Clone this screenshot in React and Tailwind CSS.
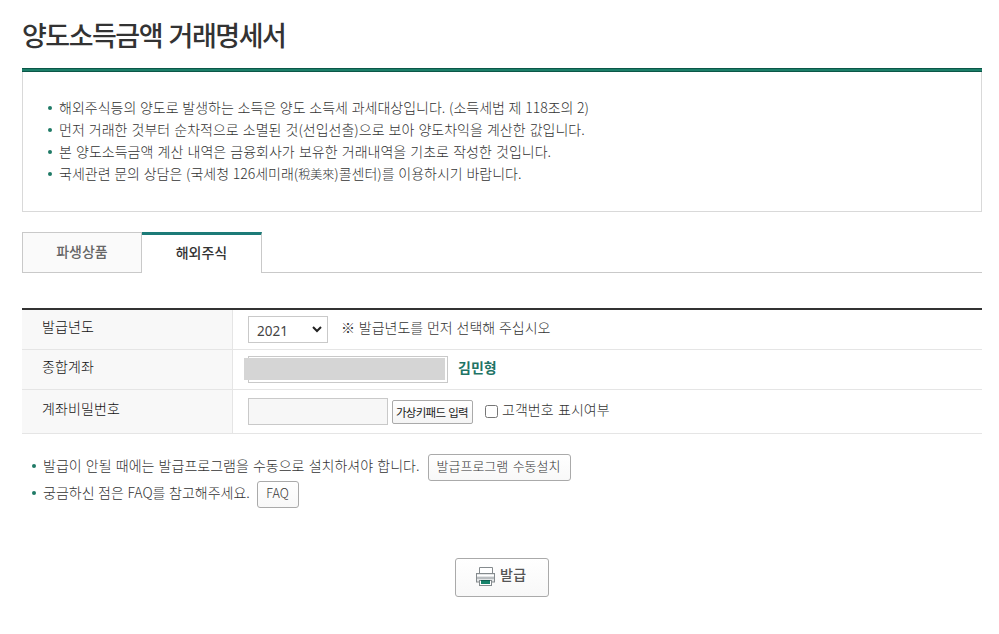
const notices = [
  { text: '해외주식등의 양도로 발생하는 소득은 양도 소득세 과세대상입니다. (소득세법 제 118조의 2)', spacing: '[word-spacing:0.6px]' },
  { text: '먼저 거래한 것부터 순차적으로 소멸된 것(선입선출)으로 보아 양도차익을 계산한 값입니다.', spacing: '[word-spacing:1px]' },
  { text: '본 양도소득금액 계산 내역은 금융회사가 보유한 거래내역을 기초로 작성한 것입니다.', spacing: '[word-spacing:1.1px]' },
  {
    text: '국세관련 문의 상담은 (국세청 126세미래(',
    hanja: '稅美來',
    rest: ')콜센터)를 이용하시기 바랍니다.',
    spacing: '[word-spacing:0.6px]',
  },
];

function Bullet({ className = '' }) {
  return <span className={`size-1 shrink-0 rounded-full bg-[#1f7a66] ${className}`} />;
}

function Row({ label, height, labelPad = 'pb-[7px]', children }) {
  return (
    <div className={`flex border-b border-[#e5e5e5] ${height}`}>
      <div className={`flex w-[211px] items-center border-r border-[#e5e5e5] bg-[#f8f8f8] pl-5 text-[#111] ${labelPad}`}>
        <span className="tracking-[0.1px]">{label}</span>
      </div>
      <div className="flex flex-1 items-start pl-[15px]">{children}</div>
    </div>
  );
}

function Printer() {
  return (
    <svg width="20" height="20" viewBox="0 0 20 20" fill="none">
      <path d="M3.500 7V.5h13V7" fill="#fff" stroke="#858b8e" />
      <rect x=".5" y="6.5" width="18" height="8.500" fill="#e4e6e7" stroke="#858b8e" />
      <path d="M1 8.500h17" stroke="#fff" />
      <path d="M1 11h17" stroke="#b9bdc0" strokeWidth="2" />
      <rect x="3.500" y="13.500" width="12" height="5" fill="#fff" stroke="#858b8e" />
      <rect x="5" y="13" width="9" height="4" fill="#16836a" />
      <path d="M5 13.500h9" stroke="#0d5f50" />
    </svg>
  );
}

export default function App() {
  return (
    <main className="h-[634px] w-[999px] overflow-hidden bg-white pr-[17px] pl-[22px] font-['Noto_Sans_CJK_KR',sans-serif] text-sm leading-[22px] font-light text-[#333]">
      <h1 className="h-[68px] pt-[14px] text-[27px] leading-[42px] font-medium tracking-[-1.500px] [word-spacing:2px] whitespace-nowrap text-[#333]">
        양도소득금액 거래명세서
      </h1>
      <div className="h-1 border-y border-[#0b5748] bg-[#1c7f69]" />
      <ul className="h-[140px] border-x border-b border-[#d9d9d9] pt-[24px] pl-[25px]">
        {notices.map((n) => (
          <li key={n.text} className="flex h-[22px] items-center whitespace-nowrap">
            <Bullet className="mt-0.5 mr-[7px]" />
            <span className={n.spacing}>
              {n.text}
              {n.hanja && <span className="text-xs leading-none">{n.hanja}</span>}
              {n.rest}
            </span>
          </li>
        ))}
      </ul>

      <nav className="mt-5 flex h-[41px]">
        <button className="flex w-[120px] items-center justify-center border border-[#c9c9c9] bg-[#fafafa] pb-[3px] font-medium text-[#666]">
          파생상품
        </button>
        <button className="flex w-[120px] items-center justify-center border-t-[3px] border-r border-t-[#1c7b78] border-r-[#c9c9c9] pb-[5px] font-medium text-[#333]">
          해외주식
        </button>
        <div className="flex-1 border-b border-[#c9c9c9]" />
      </nav>

      <section className="mt-[35px] border-t-2 border-[#333]">
        <Row label="발급년도" height="h-10">
          <div className="mt-1.5 flex h-[27px] w-20 items-center justify-between border border-[#c9c9c9] bg-white pr-[5px] pl-[8px] font-['Noto_Sans',sans-serif] text-[13.500px] font-normal text-[#444]">
            <span className="pt-0.5">2021</span>
            <svg width="10" height="7" viewBox="0 0 10 7" fill="none" stroke="#222" strokeWidth="2">
              <path d="M1 1l4 4 4-4" />
            </svg>
          </div>
          <span className="mt-1.5 ml-[13px] whitespace-nowrap [word-spacing:0.7px]">※ 발급년도를 먼저 선택해 주십시오</span>
        </Row>
        <Row label="종합계좌" height="h-10">
          <div className="mt-1.5 h-[27px] w-[200px] border border-[#c9c9c9] pt-px pr-0.5">
            <div className="-ml-[5px] h-[22px] bg-[#d5d5d5]" />
          </div>
          <span className="mt-1.5 ml-2.5 font-bold text-[#1f7466]">김민형</span>
        </Row>
        <Row label="계좌비밀번호" height="h-11" labelPad="pb-[7px]">
          <div className="mt-2 h-[27px] w-[140px] border border-[#c9c9c9] bg-[#f7f7f7]" />
          <button className="mt-2.5 ml-1 flex h-6 w-[81px] items-center justify-center rounded-[2px] border border-[#aaa] bg-linear-to-b from-white to-[#f4f4f4] pr-px text-[11.500px] font-normal tracking-[-0.7px] [word-spacing:1px] whitespace-nowrap text-[#222]">
            가상키패드 입력
          </button>
          <span className="mt-[15px] ml-3 size-[13px] rounded-[2.500px] border border-[#767676] bg-white" />
          <span className="mt-2 ml-1 whitespace-nowrap [word-spacing:1.500px]">고객번호 표시여부</span>
        </Row>
      </section>

      <ul className="mt-5 pl-2.5">
        <li className="flex h-[27px] items-start whitespace-nowrap">
          <Bullet className="mt-2.5 mr-[7px]" />
          <span className="w-[385px] [word-spacing:1.1px]">발급이 안될 때에는 발급프로그램을 수동으로 설치하셔야 합니다.</span>
          <button className="flex h-[27px] w-[143px] items-center justify-center rounded-[3px] border border-[#aaa] bg-linear-to-b from-white to-[#f8f8f8] pr-0.5 pb-[3px] text-[13px] [word-spacing:1.500px]">
            발급프로그램 수동설치
          </button>
        </li>
        <li className="flex h-[27px] items-start whitespace-nowrap">
          <Bullet className="mt-2.5 mr-[7px]" />
          <span className="w-[214px] [word-spacing:0.5px]">궁금하신 점은 FAQ를 참고해주세요.</span>
          <button className="flex h-[27px] w-[42px] items-center justify-center rounded-[3px] border border-[#aaa] bg-linear-to-b from-white to-[#f8f8f8] pr-px pb-[3px] text-[12.500px]">
            FAQ
          </button>
        </li>
      </ul>

      <div className="mt-[50px] flex pl-[433px]">
        <button className="flex h-[39px] w-[94px] items-start rounded-[3px] border border-[#aaa] bg-linear-to-b from-white to-[#f8f8f8] pl-5 font-medium text-[#555]">
          <span className="mt-2">
            <Printer />
          </span>
          <span className="mt-1 ml-1 tracking-[0.3px]">발급</span>
        </button>
      </div>
    </main>
  );
}
